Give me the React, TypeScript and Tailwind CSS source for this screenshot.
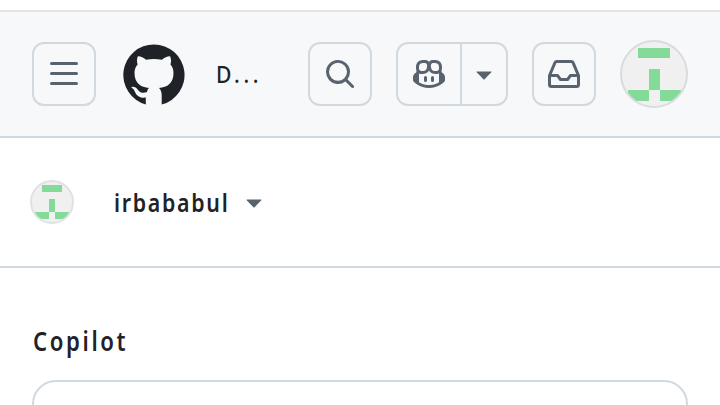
import React from "react";

const icons = {
  menu: "M1 2.75A.75.75 0 0 1 1.75 2h12.5a.75.75 0 0 1 0 1.5H1.75A.75.75 0 0 1 1 2.75Zm0 5A.75.75 0 0 1 1.75 7h12.5a.75.75 0 0 1 0 1.5H1.75A.75.75 0 0 1 1 7.75ZM1.75 12h12.5a.75.75 0 0 1 0 1.5H1.75a.75.75 0 0 1 0-1.5Z",
  search: "M10.68 11.74a6 6 0 0 1-7.922-8.982 6 6 0 0 1 8.982 7.922l3.04 3.04a.749.749 0 0 1-.326 1.275.749.749 0 0 1-.734-.215ZM11.5 7a4.499 4.499 0 1 0-8.997 0A4.499 4.499 0 0 0 11.5 7Z",
  copilot: "M7.998 15.035c-4.562 0-7.873-2.914-7.998-3.749V9.338c.085-.628.677-1.686 1.588-2.065.013-.07.024-.143.036-.218.029-.183.06-.384.126-.612-.201-.508-.254-1.084-.254-1.656 0-.87.128-1.769.693-2.484.579-.733 1.494-1.124 2.724-1.261 1.206-.134 2.262.034 2.944.765.05.053.096.108.139.165.044-.057.094-.112.143-.165.682-.731 1.738-.899 2.944-.765 1.23.137 2.145.528 2.724 1.261.566.715.693 1.614.693 2.484 0 .572-.053 1.148-.254 1.656.066.228.098.429.126.612.012.076.024.148.037.218.924.385 1.522 1.471 1.591 2.095v1.872c0 .766-3.351 3.795-8.002 3.795Zm0-1.485c2.28 0 4.584-1.11 5.002-1.433V7.862l-.023-.116c-.49.21-1.075.291-1.727.291-1.146 0-2.059-.327-2.71-.991A3.222 3.222 0 0 1 8 6.303a3.24 3.24 0 0 1-.544.743c-.65.664-1.563.991-2.71.991-.652 0-1.236-.081-1.727-.291l-.023.116v4.255c.419.323 2.722 1.433 5.002 1.433ZM6.762 2.83c-.193-.206-.637-.413-1.682-.297-1.019.113-1.479.404-1.713.7-.247.312-.369.789-.369 1.554 0 .793.129 1.171.308 1.371.162.181.519.379 1.442.379.853 0 1.339-.235 1.638-.54.315-.322.527-.827.617-1.553.117-.935-.037-1.395-.241-1.614Zm4.155-.297c-1.044-.116-1.488.091-1.681.297-.204.219-.359.679-.242 1.614.091.726.303 1.231.618 1.553.299.305.784.54 1.638.54.922 0 1.28-.198 1.442-.379.179-.2.308-.578.308-1.371 0-.765-.123-1.242-.37-1.554-.233-.296-.693-.587-1.713-.7ZM6.25 9.037a.75.75 0 0 1 .75.75v1.501a.75.75 0 0 1-1.5 0V9.787a.75.75 0 0 1 .75-.75Zm4.25.75v1.501a.75.75 0 0 1-1.5 0V9.787a.75.75 0 0 1 1.5 0Z",
  inbox: "M2.8 2.06A1.75 1.75 0 0 1 4.41 1h7.18c.7 0 1.333.417 1.61 1.06l2.74 6.395c.04.093.06.194.06.295v4.5A1.75 1.75 0 0 1 14.25 15H1.75A1.75 1.75 0 0 1 0 13.25v-4.5c0-.101.02-.202.06-.295Zm1.61.44a.25.25 0 0 0-.23.152L1.887 8H4.75a.75.75 0 0 1 .6.3L6.625 10h2.75l1.275-1.7a.75.75 0 0 1 .6-.3h2.863L11.82 2.652a.25.25 0 0 0-.23-.152Zm10.09 7h-2.875l-1.275 1.7a.75.75 0 0 1-.6.3h-3.5a.75.75 0 0 1-.6-.3L4.375 9.5H1.5v3.75c0 .138.112.25.25.25h12.5a.25.25 0 0 0 .25-.25Z",
};

function Icon({ name }: { name: keyof typeof icons }) {
  return (
    <svg viewBox="0 0 16 16" className="size-8 shrink-0 fill-[#59636e]">
      <path d={icons[name]} />
    </svg>
  );
}

function Caret() {
  return (
    <svg viewBox="0 0 16 9" className="h-[9px] w-4 shrink-0 fill-[#59636e]">
      <path d="M1 0.5H15Q16 0.5 15.3 1.3L8.6 8.2Q8 8.8 7.4 8.2L0.7 1.3Q0 0.5 1 0.5Z" />
    </svg>
  );
}

function GithubMark() {
  return (
    <svg viewBox="0 0 62 62" className="size-[62px] shrink-0">
      <path
        fill="#1f2328"
        d="M31 0.4A30.6 30.6 0 0 0 22.8 60.5V53.6C15.9 54.4 13.3 50.9 11.9 47.7C11.2 46 10.3 44.6 8.5 43.8C8 42.4 12.1 42.2 14.4 45.2C17.4 49.3 20 49.4 24 48.1C24.3 46.2 25.1 44.7 26.1 44.1C17.8 43.2 11.5 39.5 11.5 28.8C11.5 25.7 12.6 22.8 14.6 20.5C13.7 17.5 13.8 14.8 14.9 12.3C17.7 12.2 20.4 13.6 23 15.7C28 14.6 33.5 14.6 38.9 15.7C41.5 13.6 44.3 12.2 47.1 12.3C48.2 14.8 48.3 17.5 47.5 20.5C49.4 22.8 50.5 25.7 50.5 28.8C50.5 39.5 44.4 43.2 36 44.1C37.7 45.6 38.7 48.3 38.7 51.5V60.6A30.6 30.6 0 0 0 31 0.4Z"
      />
    </svg>
  );
}

function Avatar({ className }: { className: string }) {
  return (
    <span className={`block shrink-0 overflow-hidden rounded-full bg-[#f0f0f0] ${className}`}>
      <svg viewBox="0 0 64 64" className="size-full" shapeRendering="crispEdges">
        <path
          fill="#84da98"
          d="M16 5.5H48V16H16ZM27 27H37.5V48H27ZM5.5 48H27V58.5H5.5ZM37.5 48H58.5V58.5H37.5Z"
        />
      </svg>
    </span>
  );
}

function IconButton({ name, label }: { name: keyof typeof icons; label: string }) {
  return (
    <button
      aria-label={label}
      className="flex size-16 shrink-0 items-center justify-center rounded-xl border-2 border-[#d1d9e0]"
    >
      <Icon name={name} />
    </button>
  );
}

export default function App() {
  return (
    <div className="flex h-[405px] w-[720px] flex-col overflow-hidden bg-white font-['Noto_Sans',sans-serif] text-[#1f2328]">
      <header className="mt-2.5 flex h-32 shrink-0 items-center border-y-2 border-t-[#e1e3e5] border-b-[#d1d9e0] bg-[#f6f8fa] px-8">
        <IconButton name="menu" label="Menu" />
        <div className="ml-[26.5px] pt-px">
          <GithubMark />
        </div>
        <span className="ml-[31.5px] w-[92px] origin-left scale-x-[0.88] text-[24px] leading-8 font-medium tracking-[4px]">
          D...
        </span>
        <IconButton name="search" label="Search" />
        <div className="ml-6 flex h-16 w-28 shrink-0 rounded-xl border-2 border-[#d1d9e0]">
          <button aria-label="Copilot" className="flex w-16 items-center justify-center border-r-2 border-[#d1d9e0]">
            <Icon name="copilot" />
          </button>
          <button aria-label="More" className="flex flex-1 items-center justify-center pt-0.5">
            <Caret />
          </button>
        </div>
        <div className="ml-6">
          <IconButton name="inbox" label="Inbox" />
        </div>
        <Avatar className="ml-6 size-[68px] border-2 border-[#d9dbde]" />
      </header>
      <section className="flex h-[130px] shrink-0 items-center border-b-2 border-[#d1d9e0] px-[30px]">
        <Avatar className="size-11 border-2 border-[#dfe1e3]" />
        <span className="ml-10 w-[132px] origin-left scale-x-[0.82] text-[26px] leading-8 font-semibold tracking-[2.1px] whitespace-nowrap">
          irbababul
        </span>
        <div className="pt-[3px]">
          <Caret />
        </div>
      </section>
      <main className="flex flex-1 flex-col px-8 pt-14">
        <h2 className="ml-px h-14 w-24 origin-left scale-x-[0.82] text-[27px] leading-[34px] font-semibold tracking-[3.2px] whitespace-nowrap">
          Copilot
        </h2>
        <div className="h-24 shrink-0 rounded-3xl border-2 border-[#d1d9e0]" />
      </main>
    </div>
  );
}
